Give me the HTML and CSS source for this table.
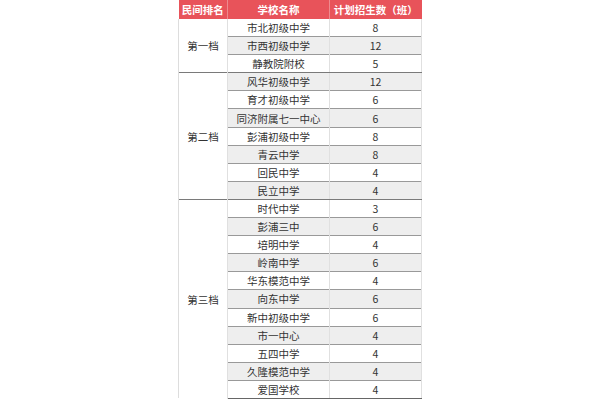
FILE: index.html
```html
<!DOCTYPE html>
<html lang="zh">
<head>
<meta charset="utf-8">
<link rel="stylesheet" href="styles.css">
</head>
<body>
<table class="rank">
<colgroup><col class="c1"><col class="c2"><col class="c3"></colgroup>
<thead>
<tr><th>民间排名</th><th>学校名称</th><th>计划招生数（班）</th></tr>
</thead>
<tbody>
<tr><td class="grp" rowspan="3">第一档</td><td>市北初级中学</td><td>8</td></tr>
<tr class="alt"><td>市西初级中学</td><td>12</td></tr>
<tr class="end"><td>静教院附校</td><td>5</td></tr>
<tr class="alt"><td class="grp" rowspan="7">第二档</td><td>风华初级中学</td><td>12</td></tr>
<tr><td>育才初级中学</td><td>6</td></tr>
<tr class="alt"><td>同济附属七一中心</td><td>6</td></tr>
<tr><td>彭浦初级中学</td><td>8</td></tr>
<tr class="alt"><td>青云中学</td><td>8</td></tr>
<tr><td>回民中学</td><td>4</td></tr>
<tr class="alt end"><td>民立中学</td><td>4</td></tr>
<tr><td class="grp" rowspan="11">第三档</td><td>时代中学</td><td>3</td></tr>
<tr class="alt"><td>彭浦三中</td><td>6</td></tr>
<tr><td>培明中学</td><td>4</td></tr>
<tr class="alt"><td>岭南中学</td><td>6</td></tr>
<tr><td>华东模范中学</td><td>4</td></tr>
<tr class="alt"><td>向东中学</td><td>6</td></tr>
<tr><td>新中初级中学</td><td>6</td></tr>
<tr class="alt"><td>市一中心</td><td>4</td></tr>
<tr><td>五四中学</td><td>4</td></tr>
<tr class="alt"><td>久隆模范中学</td><td>4</td></tr>
<tr class="end"><td>爱国学校</td><td>4</td></tr>
</tbody>
</table>
</body>
</html>
```

FILE: styles.css
```css
html, body {
  margin: 0;
  padding: 0;
  background: #ffffff;
}
body {
  width: 600px;
  height: 400px;
  overflow: hidden;
  font-family: "Noto Sans CJK SC", "Noto Sans", sans-serif;
}
.rank {
  border-collapse: collapse;
  table-layout: fixed;
  width: 243px;
  margin: 0 0 0 178px;
  font-size: 10.5px;
  color: #333333;
}
.c1 { width: 49px; }
.c2 { width: 102px; }
.c3 { width: 92px; }
.rank th {
  background: #e8535a;
  color: #ffffff;
  font-weight: bold;
  height: 19px;
  padding: 0;
  line-height: 19px;
  text-align: center;
  border: none;
  border-right: 1px solid #ee8a8e;
  white-space: nowrap;
}
.rank th:last-child { border-right: none; }
.rank td {
  height: 17.1px;
  padding: 0;
  line-height: 17px;
  text-align: center;
  border-top: 1px solid #999999;
  border-left: 1px solid #555555;
  border-right: 1px solid #e0e0e0;
}
.rank tbody tr:first-child td { border-top: none; }
.rank tr.alt td { background: #eeeeee; }
.rank tr.alt td.grp { background: #ffffff; }
.rank td.grp {
  border-left: 1px solid #dddddd;
  border-top: 1px solid #7a7a7a;
  background: #ffffff;
}
.rank tbody tr:first-child td.grp { border-top: none; }
.rank tr.end td { border-bottom: 1px solid #7a7a7a; }
.rank tbody tr:last-child td { border-bottom: 1px solid #666666; }
```
